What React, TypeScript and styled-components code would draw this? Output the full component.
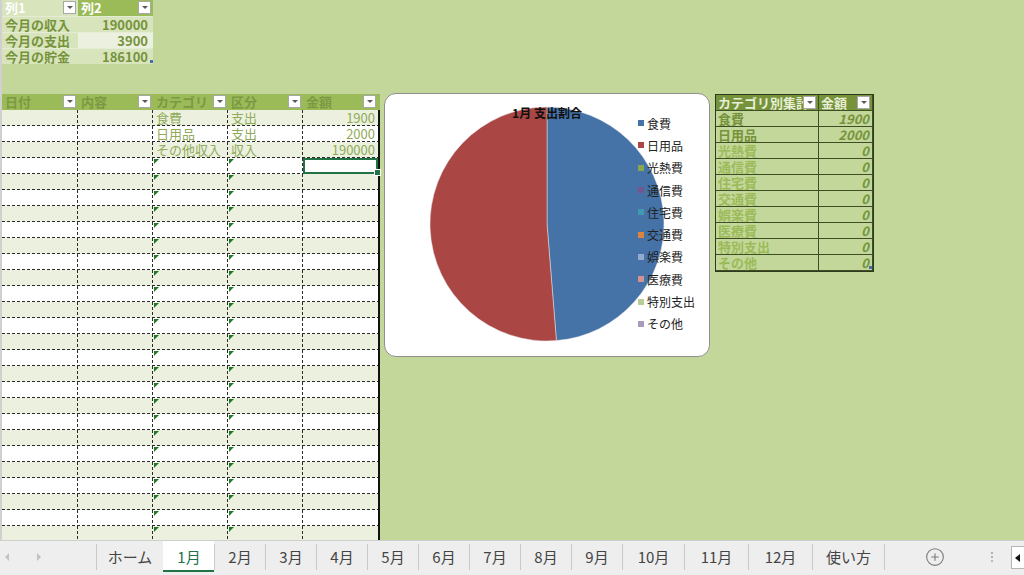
import React from "react";
import styled, { createGlobalStyle, css } from "styled-components";
import { CirclePlus, EllipsisVertical } from "lucide-react";

const GlobalStyle = createGlobalStyle`
  html, body { margin: 0; padding: 0; }
  body {
    font-family: "Noto Sans CJK JP", "Noto Sans", sans-serif;
    background: #c4d79b;
    overflow: hidden;
  }
`;

const summary = [
  { label: "今月の収入", value: 190000, shade: "#d8e4bc" },
  { label: "今月の支出", value: 3900, shade: "#ebf1de" },
  { label: "今月の貯金", value: 186100, shade: "#d8e4bc" },
];

const mainCols = ["日付", "内容", "カテゴリ", "区分", "金額"];
const entries = [
  { cat: "食費", kind: "支出", amount: 1900 },
  { cat: "日用品", kind: "支出", amount: 2000 },
  { cat: "その他収入", kind: "収入", amount: 190000 },
];
const ROW_COUNT = 27;
const SELECTED_ROW = 3;

const categories = [
  { name: "食費", amount: 1900, color: "#4572a7" },
  { name: "日用品", amount: 2000, color: "#aa4643" },
  { name: "光熱費", amount: 0, color: "#89a54e" },
  { name: "通信費", amount: 0, color: "#71588f" },
  { name: "住宅費", amount: 0, color: "#4198af" },
  { name: "交通費", amount: 0, color: "#db843d" },
  { name: "娯楽費", amount: 0, color: "#93a9cf" },
  { name: "医療費", amount: 0, color: "#d19392" },
  { name: "特別支出", amount: 0, color: "#b9cd96" },
  { name: "その他", amount: 0, color: "#a99bbd" },
];

// sheet tabs with their widths (separator included)
const sheets = [
  { name: "ホーム", w: 67 },
  ...Array.from({ length: 9 }, (_, i) => ({ name: `${i + 1}月`, w: 51 })),
  { name: "10月", w: 62 },
  { name: "11月", w: 64 },
  { name: "12月", w: 64 },
  { name: "使い方", w: 72 },
];
const ACTIVE_SHEET = "1月";

const Page = styled.div`
  width: 1024px;
  height: 575px;
  display: flex;
  flex-direction: column;
  overflow: hidden;
`;

const Sheet = styled.div`
  height: 540px;
  flex-shrink: 0;
  background: #c4d79b;
  border-left: 2px solid #d0d0d0;
  box-sizing: border-box;
  overflow: hidden;
`;

/* little filter button sitting in a table header cell */
const Dropdown = styled.span`
  position: absolute;
  right: 2px;
  top: 1px;
  width: 13px;
  height: 13px;
  box-sizing: border-box;
  background: #fff;
  border: 1px solid #a8a8a8;
  display: flex;
  align-items: center;
  justify-content: center;
  &::after {
    content: "";
    border-left: 3px solid transparent;
    border-right: 3px solid transparent;
    border-top: 3px solid #5a5a5a;
  }
`;

const ResizeMark = css`
  &::after {
    content: "";
    position: absolute;
    right: 0;
    bottom: 1px;
    width: 3px;
    height: 3px;
    background: #4a6ea9;
  }
`;

/* summary block */
const SummaryGrid = styled.div`
  display: grid;
  grid-template-columns: 76px 75px;
  grid-template-rows: repeat(4, 16px);
  width: 151px;
`;

const SummaryHead = styled.div<{ $dark?: boolean }>`
  position: relative;
  background: ${(p) => (p.$dark ? "#9bbb59" : "#d8e4bc")};
  color: #fff;
  font-size: 13px;
  font-weight: 700;
  line-height: 15px;
  padding-left: 3px;
`;

const SummaryCell = styled.div<{ $shade: string; $num?: boolean; $last?: boolean }>`
  position: relative;
  background: ${(p) => p.$shade};
  color: #76933c;
  font-size: 13px;
  font-weight: 700;
  line-height: 15px;
  padding: 0 5px 0 3px;
  text-align: ${(p) => (p.$num ? "right" : "left")};
  border-top: 1px solid #e4ecd3;
  ${(p) => p.$last && ResizeMark}
`;

const Lower = styled.div`
  display: flex;
  align-items: flex-start;
  margin-top: 29px;
`;

/* monthly ledger */
const Ledger = styled.div`
  margin-top: 1px;
  flex-shrink: 0;
`;

const LedgerHead = styled.div`
  display: grid;
  grid-template-columns: 76px repeat(4, 75px);
  height: 16px;
  background: #9bbb59;
`;

const LedgerHeadCell = styled.div`
  position: relative;
  color: #7b9942;
  font-size: 13px;
  font-weight: 700;
  line-height: 16px;
  padding-left: 3px;
  white-space: nowrap;
`;

const LedgerBody = styled.div`
  border-right: 2px solid #111;
`;

const dashH = "repeating-linear-gradient(to right, #2b2b2b 0 3px, transparent 3px 5px)";
const dashV = "repeating-linear-gradient(to bottom, #2b2b2b 0 3px, transparent 3px 5px)";

const LedgerRow = styled.div<{ $alt: boolean }>`
  display: grid;
  grid-template-columns: 76px repeat(4, 75px);
  height: 16px;
  background: ${dashH} left bottom / 100% 1px no-repeat,
    ${(p) => (p.$alt ? "#ebf1de" : "#ffffff")};
`;

const LedgerCell = styled.div<{ $num?: boolean; $flag?: boolean; $selected?: boolean; $mark?: boolean; $edge?: boolean }>`
  position: relative;
  font-size: 13px;
  line-height: 16px;
  color: #91aa5a;
  padding: 0 3px;
  text-align: ${(p) => (p.$num ? "right" : "left")};
  white-space: nowrap;
  background: ${(p) => (p.$edge ? "none" : `${dashV} right top / 1px 100% no-repeat`)};
  ${(p) =>
    p.$flag &&
    css`
      &::before {
        content: "";
        position: absolute;
        left: 1px;
        top: 1px;
        border-top: 5px solid #1d7a22;
        border-right: 5px solid transparent;
      }
    `}
  ${(p) =>
    p.$selected &&
    css`
      box-shadow: inset 0 0 0 2px #217346;
      &::after {
        content: "";
        position: absolute;
        right: -3px;
        bottom: -2px;
        width: 5px;
        height: 5px;
        background: #217346;
        border: 1px solid #fff;
      }
    `}
  ${(p) => p.$mark && css`box-shadow: -2px 0 0 #217346;`}
`;

/* pie chart */
const ChartBox = styled.div`
  position: relative;
  flex-shrink: 0;
  width: 326px;
  height: 264px;
  margin-left: 4px;
  box-sizing: border-box;
  background: #fff;
  border: 1px solid #8f8f8f;
  border-radius: 12px;
`;

const ChartTitle = styled.div`
  position: absolute;
  top: 11px;
  left: 0;
  right: 0;
  text-align: center;
  font-size: 12px;
  font-weight: 700;
  line-height: 16px;
  color: #111;
`;

const Legend = styled.ul`
  position: absolute;
  left: 253px;
  top: 18px;
  margin: 0;
  padding: 0;
  list-style: none;
`;

const LegendItem = styled.li`
  display: flex;
  align-items: center;
  gap: 3px;
  height: 22.3px;
  font-size: 12px;
  color: #222;
`;

const Swatch = styled.span<{ $color: string }>`
  width: 6px;
  height: 6px;
  background: ${(p) => p.$color};
`;

/* category totals */
const CatTable = styled.div`
  display: grid;
  grid-template-columns: 103px 54px;
  grid-auto-rows: 16px;
  margin-left: 5px;
  margin-top: 1px;
  border: 1px solid #2f3a1d;
  flex-shrink: 0;
`;

const CatHead = styled.div`
  position: relative;
  background: #76933c;
  color: #e6eed4;
  font-size: 13px;
  font-weight: 700;
  line-height: 15px;
  padding-left: 2px;
  white-space: nowrap;
  overflow: hidden;
  border-right: 1px solid #3f4f25;
  border-bottom: 1px solid #3f4f25;
`;

const CatCell = styled.div<{ $num?: boolean; $strong?: boolean; $last?: boolean }>`
  position: relative;
  font-size: 13px;
  font-weight: 700;
  line-height: 15px;
  padding: 0 3px 0 2px;
  color: ${(p) => (p.$strong || p.$num ? "#76933c" : "#9bbb59")};
  font-style: ${(p) => (p.$num ? "italic" : "normal")};
  text-align: ${(p) => (p.$num ? "right" : "left")};
  border-right: 1px solid #3f4f25;
  border-bottom: 1px solid #3f4f25;
  ${(p) => p.$last && ResizeMark}
`;

/* sheet tabs */
const TabBar = styled.div`
  height: 35px;
  display: flex;
  align-items: stretch;
  background: #eeeeee;
  border-top: 1px solid #cfcfcf;
  box-sizing: border-box;
  padding-bottom: 3px;
`;

const NavArea = styled.div`
  width: 96px;
  display: flex;
  align-items: center;
  gap: 28px;
  padding-left: 5px;
  box-sizing: border-box;
`;

const NavArrow = styled.span<{ $dir: "left" | "right" }>`
  width: 0;
  height: 0;
  border-top: 4px solid transparent;
  border-bottom: 4px solid transparent;
  ${(p) =>
    p.$dir === "left"
      ? css`border-right: 4px solid #c2c2c2;`
      : css`border-left: 4px solid #c2c2c2;`}
`;

const Tab = styled.div<{ $active?: boolean; $w: number }>`
  position: relative;
  flex-shrink: 0;
  width: ${(p) => p.$w}px;
  display: flex;
  align-items: center;
  justify-content: center;
  padding-left: 1px;
  box-sizing: border-box;
  font-size: 15px;
  color: ${(p) => (p.$active ? "#217346" : "#444")};
  background: ${(p) => (p.$active ? "#fff" : "transparent")};
  box-shadow: ${(p) => (p.$active ? "inset 0 -2px 0 #217346" : "none")};
  &::before {
    content: "";
    position: absolute;
    left: 0;
    top: 3px;
    bottom: 2px;
    width: 1px;
    background: ${(p) => (p.$active ? "transparent" : "#c9c9c9")};
  }
`;

const TabEnd = styled.div`
  width: 1px;
  margin: 3px 0 2px;
  background: #c9c9c9;
`;

const AddSheet = styled.div`
  width: 100px;
  display: flex;
  align-items: center;
  justify-content: center;
  color: #7a7a7a;
`;

const Grip = styled.div`
  width: 14px;
  display: flex;
  align-items: center;
  justify-content: center;
  color: #b4b4b4;
`;

const ScrollBox = styled.div`
  margin: 5px 0 3px 12px;
  flex: 1;
  background: #fff;
  border: 1px solid #b5b5b5;
  border-right: none;
  display: flex;
  align-items: center;
  padding-left: 3px;
  &::before {
    content: "";
    border-top: 4px solid transparent;
    border-bottom: 4px solid transparent;
    border-right: 5px solid #111;
  }
`;

function PieChart() {
  const cx = 162;
  const cy = 130;
  const r = 117;
  const total = categories.reduce((s, c) => s + c.amount, 0);
  const point = (a: number) => [cx + r * Math.sin(a), cy - r * Math.cos(a)];
  let acc = 0;
  return (
    <svg width="324" height="262" style={{ position: "absolute", left: 0, top: 0 }}>
      {categories
        .filter((c) => c.amount > 0)
        .map((c) => {
          const a0 = (acc / total) * Math.PI * 2;
          acc += c.amount;
          const a1 = (acc / total) * Math.PI * 2;
          const [x0, y0] = point(a0);
          const [x1, y1] = point(a1);
          const large = a1 - a0 > Math.PI ? 1 : 0;
          return (
            <path
              key={c.name}
              d={`M${cx} ${cy}L${x0} ${y0}A${r} ${r} 0 ${large} 1 ${x1} ${y1}Z`}
              fill={c.color}
              stroke="#e8e8e8"
              strokeWidth="0.5"
            />
          );
        })}
    </svg>
  );
}

export default function App() {
  const rows = Array.from({ length: ROW_COUNT }, (_, i) => entries[i]);
  return (
    <Page>
      <GlobalStyle />
      <Sheet>
        <SummaryGrid>
          <SummaryHead>
            列1
            <Dropdown />
          </SummaryHead>
          <SummaryHead $dark>
            列2
            <Dropdown />
          </SummaryHead>
          {summary.map((s, i) => (
            <React.Fragment key={s.label}>
              <SummaryCell $shade="#d8e4bc">{s.label}</SummaryCell>
              <SummaryCell $shade={s.shade} $num $last={i === summary.length - 1}>
                {s.value}
              </SummaryCell>
            </React.Fragment>
          ))}
        </SummaryGrid>

        <Lower>
          <Ledger>
            <LedgerHead>
              {mainCols.map((c) => (
                <LedgerHeadCell key={c}>
                  {c}
                  <Dropdown />
                </LedgerHeadCell>
              ))}
            </LedgerHead>
            <LedgerBody>
              {rows.map((e, i) => {
                const flag = i >= entries.length;
                return (
                  <LedgerRow key={i} $alt={i % 2 === 0}>
                    <LedgerCell $mark={i === SELECTED_ROW} />
                    <LedgerCell />
                    <LedgerCell $flag={flag}>{e?.cat}</LedgerCell>
                    <LedgerCell $flag={flag}>{e?.kind}</LedgerCell>
                    <LedgerCell $num $edge $selected={i === SELECTED_ROW}>
                      {e?.amount}
                    </LedgerCell>
                  </LedgerRow>
                );
              })}
            </LedgerBody>
          </Ledger>

          <ChartBox>
            <PieChart />
            <ChartTitle>1月 支出割合</ChartTitle>
            <Legend>
              {categories.map((c) => (
                <LegendItem key={c.name}>
                  <Swatch $color={c.color} />
                  {c.name}
                </LegendItem>
              ))}
            </Legend>
          </ChartBox>

          <CatTable>
            <CatHead>
              カテゴリ別集計
              <Dropdown />
            </CatHead>
            <CatHead>
              金額
              <Dropdown />
            </CatHead>
            {categories.map((c, i) => (
              <React.Fragment key={c.name}>
                <CatCell $strong={c.amount > 0}>{c.name}</CatCell>
                <CatCell $num $last={i === categories.length - 1}>
                  {c.amount}
                </CatCell>
              </React.Fragment>
            ))}
          </CatTable>
        </Lower>
      </Sheet>

      <TabBar>
        <NavArea>
          <NavArrow $dir="left" />
          <NavArrow $dir="right" />
        </NavArea>
        {sheets.map((s) => (
          <Tab key={s.name} $w={s.w} $active={s.name === ACTIVE_SHEET}>
            {s.name}
          </Tab>
        ))}
        <TabEnd />
        <AddSheet>
          <CirclePlus size={20} strokeWidth={1.3} />
        </AddSheet>
        <Grip>
          <EllipsisVertical size={16} strokeWidth={2} />
        </Grip>
        <ScrollBox />
      </TabBar>
    </Page>
  );
}
